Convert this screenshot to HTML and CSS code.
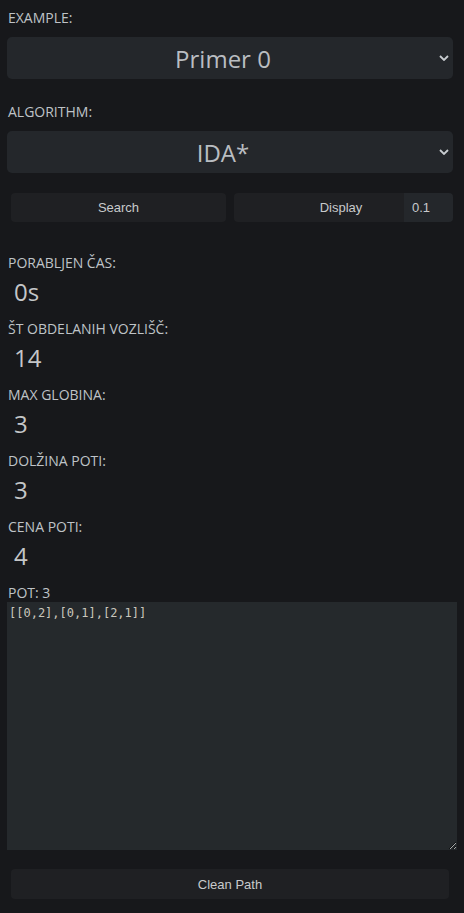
FILE: index.html
```html
<!DOCTYPE html>
<html lang="sl">
<head>
<meta charset="utf-8">
<title>Search</title>
<link rel="stylesheet" href="styles.css">
</head>
<body>
<main class="panel">
  <label class="label">EXAMPLE:</label>
  <div class="select-wrap">
    <select class="select"><option>Primer 0</option></select>
    <svg class="chev" width="10" height="6" viewBox="0 0 10 6"><path d="M1 1 L5 5 L9 1" fill="none" stroke="#c9cdd1" stroke-width="1.8"/></svg>
  </div>
  <label class="label label-alg">ALGORITHM:</label>
  <div class="select-wrap">
    <select class="select"><option>IDA*</option></select>
    <svg class="chev" width="10" height="6" viewBox="0 0 10 6"><path d="M1 1 L5 5 L9 1" fill="none" stroke="#c9cdd1" stroke-width="1.8"/></svg>
  </div>
  <div class="actions">
    <button class="btn btn-search">Search</button>
    <div class="display-group">
      <button class="btn btn-display">Display</button>
      <input class="speed" value="0.1">
    </div>
  </div>
  <section class="stats">
    <div class="stat"><div class="label">PORABLJEN ČAS:</div><div class="value">0s</div></div>
    <div class="stat"><div class="label">ŠT OBDELANIH VOZLIŠČ:</div><div class="value">14</div></div>
    <div class="stat"><div class="label">MAX GLOBINA:</div><div class="value">3</div></div>
    <div class="stat"><div class="label">DOLŽINA POTI:</div><div class="value">3</div></div>
    <div class="stat"><div class="label">CENA POTI:</div><div class="value">4</div></div>
  </section>
  <div class="label">POT: 3</div>
  <textarea class="path">[[0,2],[0,1],[2,1]]</textarea>
  <button class="btn btn-clean">Clean Path</button>
</main>
</body>
</html>
```
FILE: styles.css
```css
:root { color-scheme: dark; }
* { box-sizing: border-box; }
html, body {
  margin: 0;
  background: #17181b;
}
body {
  font-family: "Open Sans", sans-serif;
  color: #bfc3c7;
}
.panel {
  width: 446px;
  margin-left: 7px;
  padding-top: 8px;
  display: flex;
  flex-direction: column;
}
.label {
  display: block;
  font-size: 14px;
  line-height: 19px;
  height: 19px;
  padding-left: 1px;
  color: #bfc3c7;
}
.label-alg { margin-top: 23px; }
.select-wrap {
  position: relative;
  margin-top: 10px;
}
.select {
  appearance: none;
  -webkit-appearance: none;
  display: block;
  width: 446px;
  height: 42px;
  border: none;
  border-radius: 5px;
  background: #24272b;
  color: #b9bdc1;
  font-family: "Open Sans", sans-serif;
  font-size: 24px;
  text-align: center;
  text-align-last: center;
  padding: 0 14px 0 0;
  outline: none;
}
.chev {
  position: absolute;
  right: 4px;
  top: 18px;
}
.actions {
  display: flex;
  gap: 8px;
  margin-top: 20px;
  padding-left: 4px;
}
.btn {
  border: none;
  border-radius: 4px;
  background: #1f2023;
  color: #c8cacc;
  font-family: "Liberation Sans", Arial, sans-serif;
  font-size: 13px;
  height: 29px;
  padding: 0;
}
.btn-search { width: 215px; }
.display-group {
  display: flex;
  width: 219px;
  border-radius: 4px;
  overflow: hidden;
}
.btn-display {
  width: 170px;
  border-radius: 0;
  padding-left: 44px;
}
.speed {
  width: 49px;
  height: 29px;
  border: none;
  background: #24272b;
  color: #c8cacc;
  font-family: "Liberation Sans", Arial, sans-serif;
  font-size: 13px;
  padding: 0 0 0 8px;
  outline: none;
}
.stats {
  margin-top: 31px;
  display: flex;
  flex-direction: column;
}
.stat {
  height: 66px;
}
.value {
  margin-top: 4px;
  font-size: 24px;
  line-height: 32px;
  padding-left: 7px;
  color: #c4c6c8;
}
.path {
  display: block;
  width: 450px;
  height: 248px;
  margin: 0;
  border: none;
  border-radius: 0;
  background: #25292c;
  color: #c9c6bc;
  font-family: "DejaVu Sans Mono", monospace;
  font-size: 12px;
  line-height: 16px;
  padding: 3px 2px;
  outline: none;
  resize: vertical;
}
.btn-clean {
  margin: 19px 4px 0;
  width: 438px;
  height: 30px;
}
```
